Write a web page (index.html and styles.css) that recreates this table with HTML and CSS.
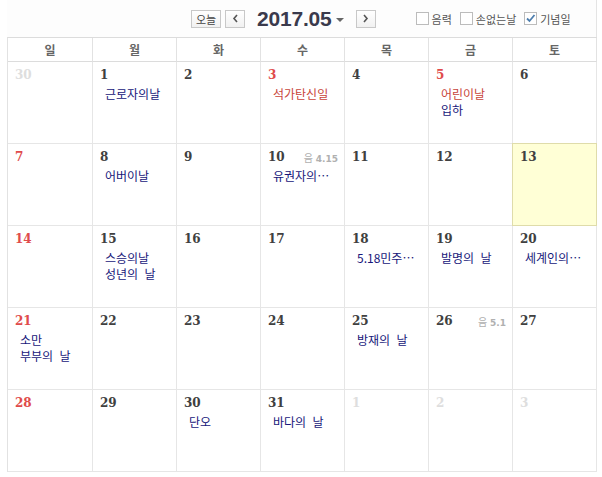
FILE: index.html
```html
<!DOCTYPE html>
<html lang="ko">
<head>
    <meta charset="UTF-8">
    <title>달력</title>
    <link rel="stylesheet" href="styles.css">
</head>
<body>
    <div class="calendar">
        <div class="toolbar">
            <div class="nav">
                <button class="btn today">오늘</button>
                <button class="btn arrow">
                    <svg width="7" height="9" viewBox="0 0 7 9"><path d="M5 1 L2 4.5 L5 8" fill="none" stroke="#555" stroke-width="1.6"/></svg>
                </button>
                <span class="title">2017.05</span>
                <span class="caret"></span>
                <button class="btn arrow next">
                    <svg width="7" height="9" viewBox="0 0 7 9"><path d="M2 1 L5 4.5 L2 8" fill="none" stroke="#555" stroke-width="1.6"/></svg>
                </button>
            </div>
            <div class="options">
                <label class="opt"><span class="box"></span>음력</label>
                <label class="opt"><span class="box"></span>손없는날</label>
                <label class="opt"><span class="box checked">
                    <svg width="11" height="11" viewBox="0 0 11 11"><path d="M2 5.5 L4.5 8 L9.5 2" fill="none" stroke="#4d7eae" stroke-width="1.8"/></svg>
                </span>기념일</label>
            </div>
        </div>

        <div class="grid">
            <div class="dow">일</div>
            <div class="dow">월</div>
            <div class="dow">화</div>
            <div class="dow">수</div>
            <div class="dow">목</div>
            <div class="dow">금</div>
            <div class="dow">토</div>

            <!-- week 1 -->
            <div class="day other"><span class="num">30</span></div>
            <div class="day"><span class="num">1</span><p class="ev">근로자의날</p></div>
            <div class="day"><span class="num">2</span></div>
            <div class="day"><span class="num red">3</span><p class="ev holiday">석가탄신일</p></div>
            <div class="day"><span class="num">4</span></div>
            <div class="day"><span class="num red">5</span><p class="ev holiday">어린이날</p><p class="ev">입하</p></div>
            <div class="day"><span class="num">6</span></div>

            <!-- week 2 -->
            <div class="day"><span class="num red">7</span></div>
            <div class="day"><span class="num">8</span><p class="ev">어버이날</p></div>
            <div class="day"><span class="num">9</span></div>
            <div class="day"><span class="num">10</span><span class="lunar">음 <b>4.15</b></span><p class="ev">유권자의 날</p></div>
            <div class="day"><span class="num">11</span></div>
            <div class="day"><span class="num">12</span></div>
            <div class="day today-cell"><span class="num">13</span></div>

            <!-- week 3 -->
            <div class="day"><span class="num red">14</span></div>
            <div class="day"><span class="num">15</span><p class="ev">스승의날</p><p class="ev">성년의 날</p></div>
            <div class="day"><span class="num">16</span></div>
            <div class="day"><span class="num">17</span></div>
            <div class="day"><span class="num">18</span><p class="ev">5.18민주화운동 기념일</p></div>
            <div class="day"><span class="num">19</span><p class="ev">발명의 날</p></div>
            <div class="day"><span class="num">20</span><p class="ev">세계인의 날</p></div>

            <!-- week 4 -->
            <div class="day"><span class="num red">21</span><p class="ev">소만</p><p class="ev">부부의 날</p></div>
            <div class="day"><span class="num">22</span></div>
            <div class="day"><span class="num">23</span></div>
            <div class="day"><span class="num">24</span></div>
            <div class="day"><span class="num">25</span><p class="ev">방재의 날</p></div>
            <div class="day"><span class="num">26</span><span class="lunar">음 <b>5.1</b></span></div>
            <div class="day"><span class="num">27</span></div>

            <!-- week 5 -->
            <div class="day"><span class="num red">28</span></div>
            <div class="day"><span class="num">29</span></div>
            <div class="day"><span class="num">30</span><p class="ev">단오</p></div>
            <div class="day"><span class="num">31</span><p class="ev">바다의 날</p></div>
            <div class="day other"><span class="num">1</span></div>
            <div class="day other"><span class="num">2</span></div>
            <div class="day other"><span class="num">3</span></div>
        </div>
    </div>
</body>
</html>
```

FILE: styles.css
```css
*{
    padding: 0;
    margin: 0;
    box-sizing: border-box;
}
body{
    background: #fff;
    font-family: "Noto Sans CJK KR", "DejaVu Sans", sans-serif;
    color: #333;
}
.calendar{
    width: 590px;
    margin-left: 7px;
}
.toolbar{
    height: 37px;
    display: flex;
    align-items: center;
    border-right: 1px solid #e4e4e4;
    background: #fdfdfd;
}
.nav{
    display: flex;
    align-items: center;
    margin-left: 184px;
}
.btn{
    height: 18px;
    border: 1px solid #c8c8c8;
    background: linear-gradient(#fff, #f1f1f1);
    font-family: "Noto Sans CJK KR", sans-serif;
    font-size: 11px;
    color: #444;
    display: flex;
    align-items: center;
    justify-content: center;
}
.today{
    width: 30px;
}
.arrow{
    width: 20px;
    margin-left: 4px;
}
.next{
    margin-left: 12px;
}
.title{
    font-family: "Liberation Sans", Arial, sans-serif;
    font-weight: bold;
    font-size: 21px;
    letter-spacing: -0.2px;
    color: #3a3a4c;
    margin-left: 12px;
}
.caret{
    width: 0;
    height: 0;
    border-left: 4px solid transparent;
    border-right: 4px solid transparent;
    border-top: 4px solid #666;
    margin-left: 4px;
    margin-top: 2px;
}
.options{
    display: flex;
    align-items: center;
    margin-left: 40px;
}
.opt{
    display: flex;
    align-items: center;
    font-size: 11px;
    color: #555;
    margin-right: 8px;
}
.box{
    width: 13px;
    height: 13px;
    border: 1px solid #bcbcbc;
    background: #fff;
    margin-right: 3px;
    display: flex;
    align-items: center;
    justify-content: center;
}
.grid{
    display: grid;
    grid-template-columns: 85px repeat(6, 84px);
    grid-template-rows: 24px repeat(5, 82px);
    border-top: 1px solid #dcdcdc;
    border-left: 1px solid #e2e2e2;
}
.dow{
    border-right: 1px solid #e2e2e2;
    border-bottom: 1px solid #dcdcdc;
    text-align: center;
    font-size: 12px;
    font-weight: bold;
    line-height: 23px;
    color: #666;
}
.day{
    border-right: 1px solid #e6e6e6;
    border-bottom: 1px solid #e6e6e6;
    padding: 5px 0 0 7px;
    position: relative;
    overflow: hidden;
}
.num{
    display: block;
    font-family: "DejaVu Serif", "Liberation Serif", serif;
    font-weight: bold;
    font-size: 12px;
    line-height: 16px;
    color: #404040;
}
.num.red{
    color: #e04b4b;
}
.other .num{
    color: #dedede;
}
.lunar{
    position: absolute;
    top: 6px;
    right: 6px;
    font-size: 10px;
    color: #b0b0b0;
}
.lunar b{
    font-family: "DejaVu Sans", sans-serif;
    font-size: 9px;
}
.ev{
    width: 65px;
    font-size: 12px;
    line-height: 16px;
    word-spacing: 3px;
    color: #17177a;
    padding: 3px 0 0 5px;
    white-space: nowrap;
    overflow: hidden;
    text-overflow: ellipsis;
}
.ev + .ev{
    padding-top: 0;
}
.ev.holiday{
    color: #c8453a;
}
.today-cell{
    background: #ffffd6;
    border: 1px solid #dfdcaa;
    margin: -1px 0 0 -1px;
}
```
